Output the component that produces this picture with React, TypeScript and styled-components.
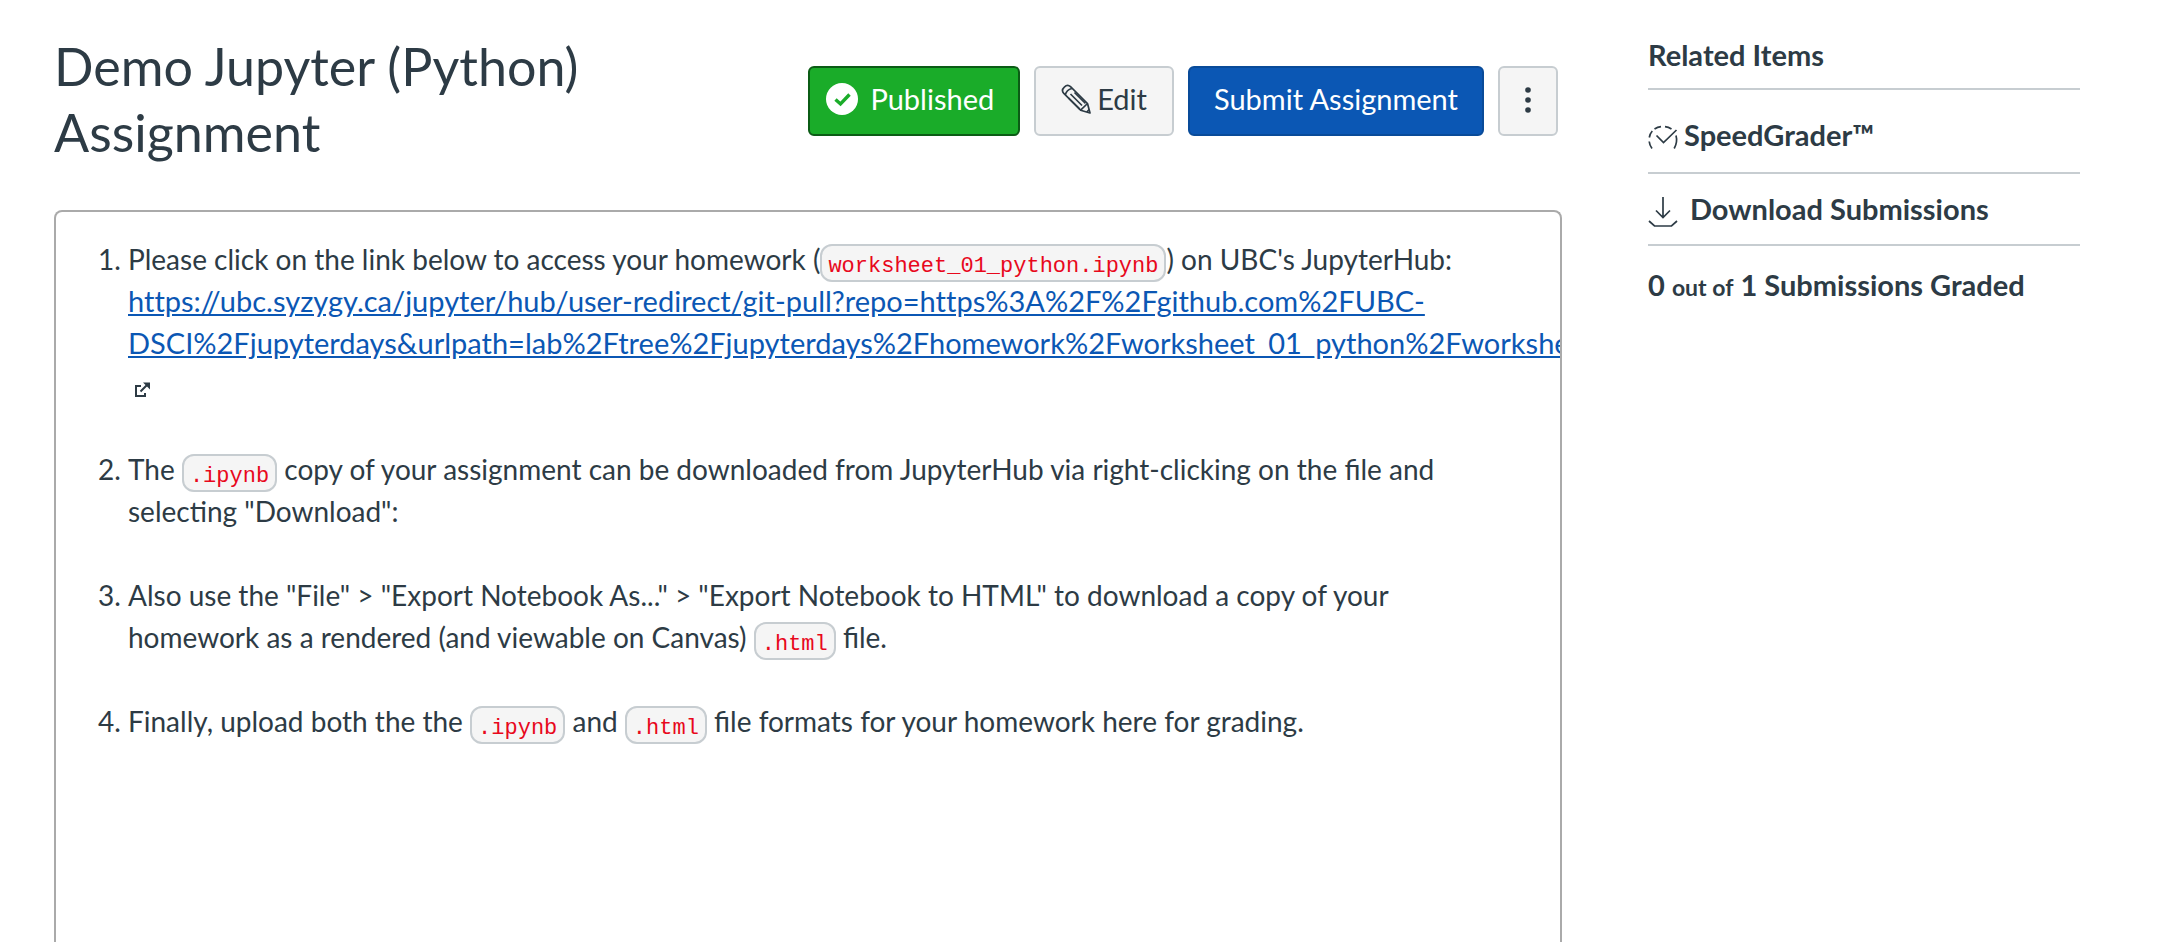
import React from 'react';
import styled, { createGlobalStyle } from 'styled-components';

const GlobalStyle = createGlobalStyle`
  *, *::before, *::after { box-sizing: border-box; }
  body {
    margin: 0;
    background: #fff;
    color: #2d3b45;
    font-family: Lato, "Liberation Sans", sans-serif;
    font-size: 29px;
    line-height: 42px;
  }
`;

const Page = styled.div`
  display: flex;
  gap: 86px;
  min-height: 100vh;
  padding: 0 98px 0 54px;
`;

const Main = styled.main`
  flex: 1;
  min-width: 0;
  display: flex;
  flex-direction: column;
`;

const Header = styled.header`
  display: flex;
  justify-content: space-between;
  align-items: flex-start;
  padding: 33px 4px 45px 0;
`;

const Title = styled.h1`
  flex: 0 1 640px;
  margin: 0;
  font-size: 52px;
  font-weight: 400;
  line-height: 66px;
`;

const Actions = styled.div`
  display: flex;
  gap: 14px;
  margin-top: 33px;
`;

const tones = {
  success: { bg: '#1aac29', border: '#0b5c15', text: '#fff' },
  primary: { bg: '#0b57b4', border: '#094b99', text: '#fff' },
  plain: { bg: '#f5f5f5', border: '#c7cdd1', text: '#2d3b45' },
};

const Button = styled.button<{ $tone: keyof typeof tones }>`
  display: flex;
  align-items: center;
  height: 70px;
  padding: 0 24px 4px;
  border: 2px solid ${(p) => tones[p.$tone].border};
  border-radius: 6px;
  background: ${(p) => tones[p.$tone].bg};
  color: ${(p) => tones[p.$tone].text};
  font: inherit;
  white-space: nowrap;
  cursor: pointer;
`;

const PublishedButton = styled(Button)`
  gap: 12px;
  padding: 0 24px 4px 16px;
`;

const EditButton = styled(Button)`
  gap: 6px;
  padding: 0 25px 4px;
`;

const MoreButton = styled(Button)`
  justify-content: center;
  width: 60px;
  padding: 0 0 2px;
`;

const Description = styled.section`
  flex: 1;
  padding: 26px 72px;
  border: 2px solid #aaa;
  border-bottom: 0;
  border-radius: 8px 8px 0 0;
  font-size: 28px;
  overflow: hidden;
`;

const Steps = styled.ol`
  margin: 0;
  padding: 0;
`;

const Step = styled.li`
  margin-bottom: 42px;
`;

const Code = styled.code`
  padding: 8px 6px 1px;
  border: 2px solid #c7cdd1;
  border-radius: 12px;
  background: #f5f5f5;
  color: #e8081c;
  font-family: "Liberation Mono", monospace;
  font-size: 22px;
  line-height: 22px;
  vertical-align: -2px;
`;

const Link = styled.a`
  color: #0b57b4;
  font-size: 29px;
  line-height: 29px;
  font-variant-ligatures: none;
  text-decoration: underline;
`;

const ExternalMark = styled.svg`
  margin-left: 6px;
  vertical-align: -2px;
`;

const Aside = styled.aside`
  flex: 0 0 432px;
  padding-top: 34px;
  font-weight: 700;
`;

const AsideTitle = styled.h2`
  margin: 0;
  padding-bottom: 12px;
  border-bottom: 2px solid #c7cdd1;
  font-size: 29px;
  line-height: 42px;
`;

const AsideList = styled.ul`
  margin: 0;
  padding: 0;
  list-style: none;
`;

const AsideItem = styled.li<{ $top: number; $bottom: number }>`
  padding: ${(p) => p.$top}px 0 ${(p) => p.$bottom}px;
  border-bottom: 2px solid #c7cdd1;
`;

const AsideLink = styled.a<{ $gap: number }>`
  display: flex;
  align-items: center;
  gap: ${(p) => p.$gap}px;
  color: inherit;
  text-decoration: none;

  svg {
    overflow: visible;
  }
`;

const Graded = styled.p`
  margin: 0;
  padding-top: 18px;
`;

const Small = styled.span`
  font-size: 23px;
`;

const CheckIcon = () => (
  <svg width="32" height="32" viewBox="0 0 32 32" aria-hidden="true">
    <circle cx="16" cy="16" r="16" fill="#fff" />
    <path d="M9.500 16.500l5 4.500 9-9.500" fill="none" stroke="#1aac29" strokeWidth="3.400" />
  </svg>
);

const PencilIcon = () => (
  <svg width="30" height="30" viewBox="0 0 30 30" fill="none" stroke="currentColor" strokeWidth="1.700" strokeLinejoin="round" aria-hidden="true">
    <path d="M29 29l-2.500-9.500L9.500 2.700C7.600 .900 5.400 1 3.300 3.100C1 5.300 1 7.500 2.800 9.400L19.600 26.200Z" />
    <path d="M26.500 19.500l-6.900 6.700M10.800 4.500Q5.500 6 4.300 10.800M9.500 10l11.500 11.500M7.500 14L18.500 24.800M13.500 8.500l11 10.800M25.800 28l2.300-2.500" />
  </svg>
);

const MoreIcon = () => (
  <svg width="6" height="26" viewBox="0 0 6 26" fill="currentColor" aria-hidden="true">
    <circle cx="3" cy="3" r="2.800" />
    <circle cx="3" cy="13" r="2.800" />
    <circle cx="3" cy="23" r="2.800" />
  </svg>
);

const SpeedIcon = () => (
  <svg width="30" height="30" viewBox="0 -2 30 30" fill="none" stroke="currentColor" strokeWidth="1.700" aria-hidden="true">
    <path d="M4 26.500Q1.500 23 1.200 19.500M1.300 15.500Q2 11.500 4.300 9M6.500 7Q9.500 5 13 4.600M17 4.600Q20.500 5 23.500 7M28 13.500Q29.800 20 26.200 26.500" />
    <path d="M8.500 13.500l7 7L28.500 8" />
  </svg>
);

const DownloadIcon = () => (
  <svg width="30" height="30" viewBox="0 -3 30 30" fill="none" stroke="currentColor" strokeWidth="1.700" aria-hidden="true">
    <path d="M15 0v20M8 13.500l7 7 7-7M1 24l5.500 5h17l5.500-5" />
  </svg>
);

const ExternalIcon = () => (
  <ExternalMark width="17" height="16" viewBox="0 0 17 16" role="img" aria-label="Links to an external site.">
    <path d="M7 4H2v10h9V11M6.500 9.500L13 3" fill="none" stroke="#2d3b45" strokeWidth="2" />
    <path d="M9 .500h7v7Z" fill="#2d3b45" />
  </ExternalMark>
);

const jupyterUrl =
  'https://ubc.syzygy.ca/jupyter/hub/user-redirect/git-pull?repo=https%3A%2F%2Fgithub.com%2FUBC-DSCI%2Fjupyterdays&urlpath=lab%2Ftree%2Fjupyterdays%2Fhomework%2Fworksheet_01_python%2Fworksheet_01_python.ipynb';

export default function App() {
  return (
    <>
      <GlobalStyle />
      <Page>
        <Main>
          <Header>
            <Title>Demo Jupyter (Python) Assignment</Title>
            <Actions>
              <PublishedButton $tone="success">
                <CheckIcon />
                Published
              </PublishedButton>
              <EditButton $tone="plain">
                <PencilIcon />
                Edit
              </EditButton>
              <Button $tone="primary">Submit Assignment</Button>
              <MoreButton $tone="plain" aria-label="More options">
                <MoreIcon />
              </MoreButton>
            </Actions>
          </Header>
          <Description>
            <Steps>
              <Step>
                Please click on the link below to access your homework (<Code>worksheet_01_python.ipynb</Code>) on
                UBC's JupyterHub: <Link href={jupyterUrl}>{jupyterUrl}</Link> <ExternalIcon />
              </Step>
              <Step>
                The <Code>.ipynb</Code> copy of your assignment can be downloaded from JupyterHub via right-clicking on
                the file and selecting "Download":
              </Step>
              <Step>
                Also use the "File" &gt; "Export Notebook As..." &gt; "Export Notebook to HTML" to download a copy of
                your homework as a rendered (and viewable on Canvas) <Code>.html</Code> file.
              </Step>
              <Step>
                Finally, upload both the the <Code>.ipynb</Code> and <Code>.html</Code> file formats for your homework
                here for grading.
              </Step>
            </Steps>
          </Description>
        </Main>
        <Aside>
          <AsideTitle>Related Items</AsideTitle>
          <AsideList>
            <AsideItem $top={24} $bottom={16}>
              <AsideLink href="#speedgrader" $gap={6}>
                <SpeedIcon />
                SpeedGrader™
              </AsideLink>
            </AsideItem>
            <AsideItem $top={14} $bottom={14}>
              <AsideLink href="#download" $gap={12}>
                <DownloadIcon />
                Download Submissions
              </AsideLink>
            </AsideItem>
          </AsideList>
          <Graded>
            0 <Small>out of</Small> 1 Submissions Graded
          </Graded>
        </Aside>
      </Page>
    </>
  );
}
